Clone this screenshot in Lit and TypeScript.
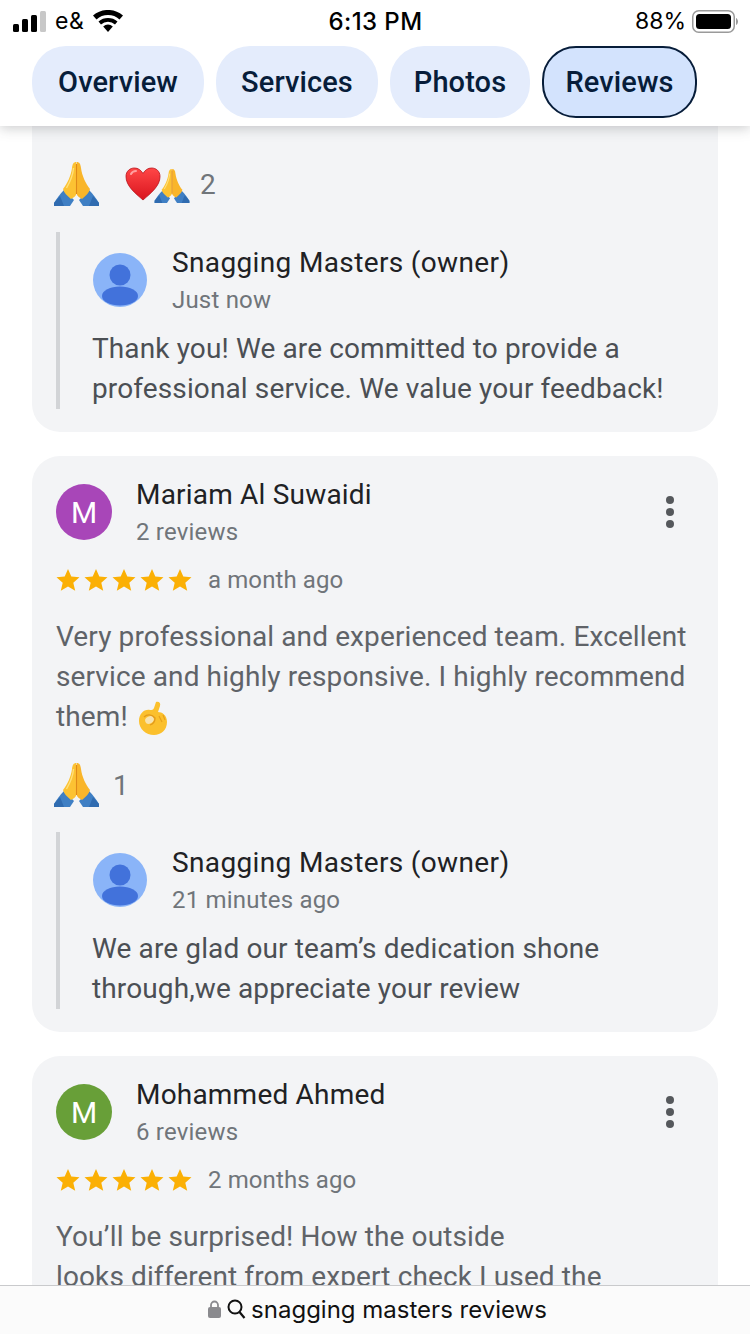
import { LitElement, html, css, svg } from "lit";
import { customElement } from "lit/decorators.js";

const pray = (w: number, h: number) => html`<svg class="emoji" width=${w} height=${h} viewBox="0 0 45 44">
  <path d="M0 44V41C3 36 6 32 10 28L20 38L16 44Z" fill="#3f7fc4"/>
  <path d="M45 44V41C42 36 39 32 35 28L25 38L29 44Z" fill="#3f7fc4"/>
  <path d="M0 44V41L6 34L10 44Z" fill="#2f6bb0"/>
  <path d="M45 44V41L39 34L35 44Z" fill="#2f6bb0"/>
  <path d="M22.300 0C19.500 0 18.500 2 18 6C17 14 13 22 9 27C10 31 13 33.500 17 37C19 36 22 34 22.300 32Z" fill="#fcc233"/>
  <path d="M22.700 0C25.500 0 26.500 2 27 6C28 14 32 22 36 27C35 31 32 33.500 28 37C26 36 23 34 22.700 32Z" fill="#f9b52a"/>
  <path d="M22.500 2V32" stroke="#e08a1a" stroke-width="1.100"/>
  <path d="M19.500 6C19 13 16 20 12.500 26" stroke="#ffe07a" stroke-width="1.400" fill="none"/>
</svg>`;

const heart = html`<svg class="emoji heart" width="36" height="36" viewBox="0 0 36 36">
  <defs>
    <linearGradient id="hg" x1="0" y1="0" x2="0" y2="1">
      <stop offset="0" stop-color="#ff4747"/>
      <stop offset="1" stop-color="#d9141e"/>
    </linearGradient>
  </defs>
  <path d="M18 34C10 27 1 20 1 10.500C1 5 5 2 9.500 2C13 2 16 4 18 7.500C20 4 23 2 26.500 2C31 2 35 5 35 10.500C35 20 26 27 18 34Z" fill="url(#hg)" stroke="#b81018" stroke-width="0.800"/>
  <path d="M6 8C7 6 9 5 11 5" stroke="#ffa0a0" stroke-width="2" fill="none" stroke-linecap="round"/>
</svg>`;

const okHand = html`<svg class="emoji ok" width="30" height="34" viewBox="0 0 30 34">
  <path d="M18 1C21 0 23 2 22 5L20 11C24 11 29 14 29 21C29 29 23 34 16 34C8 34 1 28 1 20C1 13 6 8 12 9C14 9 15 9 16 7Z" fill="#fbc02d"/>
  <ellipse cx="11.500" cy="19" rx="4.500" ry="3.500" fill="#f7e3b0" transform="rotate(-25 11.500 19)"/>
  <path d="M6 16C9 13 14 13 17 17C17 20 15 23 12 24" stroke="#e39a1c" stroke-width="1.300" fill="none"/>
  <path d="M21 15L24 21M25 14L27 19" stroke="#e8a01c" stroke-width="1.200" fill="none"/>
</svg>`;

const person = html`<svg class="owner-av" width="56" height="56" viewBox="0 0 56 56">
  <circle cx="28" cy="28" r="27" fill="#8ab4f8"/>
  <circle cx="28" cy="23" r="10.500" fill="#4272db"/>
  <ellipse cx="28" cy="44" rx="18" ry="9.500" fill="#4272db"/>
</svg>`;

const starPath = "M12 1l3.300 7.600 8.200.7-6.200 5.400 1.900 8.100L12 18.500 4.800 22.800l1.900-8.100L.5 9.300l8.200-.7z";
const stars = html`<svg class="stars" width="136" height="24" viewBox="0 0 136 24">
  ${[0, 28, 56, 84, 112].map(
    (x) => svg`<path transform="translate(${x} 0)" d=${starPath} fill="#fbb005"/>`
  )}
</svg>`;

const dots = html`<svg class="dots" width="10" height="34" viewBox="0 0 10 34">
  <circle cx="5" cy="5" r="4" fill="#55585c"/><circle cx="5" cy="17" r="4" fill="#55585c"/><circle cx="5" cy="29" r="4" fill="#55585c"/>
</svg>`;

const TABS = [
  { label: "Overview", width: 172 },
  { label: "Services", width: 162 },
  { label: "Photos", width: 140 },
  { label: "Reviews", width: 155, active: true },
];

@customElement("app-root")
export class AppRoot extends LitElement {
  static styles = css`
    :host {
      display: block;
      width: 750px;
      height: 1334px;
      overflow: hidden;
      position: relative;
      background: #fff;
      font-family: Roboto, "Liberation Sans", sans-serif;
    }
    header {
      position: relative;
      z-index: 2;
      height: 126px;
      background: #fff;
      box-shadow: 0 2px 12px rgba(60, 64, 67, 0.28);
    }
    .status {
      height: 46px;
      box-sizing: border-box;
      display: grid;
      grid-template-columns: 1fr auto 1fr;
      align-items: center;
      padding: 0 12px 4px 13px;
      color: #000;
      font-family: Inter, "Liberation Sans", sans-serif;
    }
    .st-left { display: flex; align-items: center; font-size: 23px; }
    .st-left span { margin: 0 9px; letter-spacing: 0.5px; }
    .time { font-size: 24px; font-weight: 500; letter-spacing: 0.4px; }
    .st-right { display: flex; justify-content: flex-end; align-items: center; gap: 6px; font-size: 23px; }
    .tabs { display: flex; gap: 12px; padding: 0 32px; }
    .tab {
      height: 72px;
      box-sizing: border-box;
      border-radius: 34px;
      background: #e4ecfc;
      color: #071d3a;
      font-size: 29px;
      font-weight: 500;
      letter-spacing: 0.1px;
      display: flex;
      align-items: center;
      justify-content: center;
    }
    .tab.active {
      background: #d3e3fd;
      border: 2px solid #071d3a;
    }
    main {
      display: flex;
      flex-direction: column;
      gap: 24px;
      padding: 0 32px;
    }
    .card {
      background: #f3f4f6;
      border-radius: 28px;
      padding: 21px 24px 24px;
    }
    .card.first {
      margin-top: -30px;
      padding-top: 66px;
      border-radius: 0 0 28px 28px;
    }
    .head { display: flex; align-items: flex-start; gap: 24px; }
    .avatar {
      width: 56px;
      height: 56px;
      margin-top: 7px;
      border-radius: 50%;
      color: #fff;
      font-size: 30px;
      display: flex;
      align-items: center;
      justify-content: center;
      flex: none;
    }
    .who { flex: 1; }
    .name { font-size: 28px; line-height: 36px; color: #202124; letter-spacing: 0.2px; }
    .reply .name { letter-spacing: 0.36px; }
    .sub { font-size: 24px; line-height: 36px; margin-top: 1px; color: #70757a; letter-spacing: 0.2px; }
    .dots { margin: 18px 19px 0 0; display: block; }
    .rating { display: flex; align-items: center; gap: 16px; margin-top: 12px; height: 36px; }
    .stars { display: block; }
    .ago { font-size: 24px; color: #70757a; letter-spacing: 0.1px; }
    .body { margin-top: 19px; font-size: 28px; line-height: 40px; color: #5f6368; letter-spacing: 0.11px; }
    .emoji { display: block; flex: none; }
    .ok { display: inline-block; vertical-align: -9px; margin-left: 3px; }
    .react { display: flex; align-items: center; height: 44px; margin: 26px 0 0 -2px; }
    .card.first .react { margin-top: 0; }
    .react .count { font-size: 28px; color: #70757a; margin-left: 14px; }
    .react .count.after-small { margin-left: 10px; }
    .react .heart { margin-left: 26px; }
    .react .small { margin: 4px 0 0 -7px; }
    .reply {
      margin-top: 25px;
      border-left: 4px solid #d2d4d7;
      padding: 13px 0 0 32px;
    }
    .card.first .reply { margin-top: 26px; }
    .reply-head { display: flex; align-items: flex-start; gap: 24px; }
    .owner-av { display: block; flex: none; margin-top: 7px; }
    .reply-text { margin: 11px 0 -1px; font-size: 28px; line-height: 40px; color: #4b4f54; letter-spacing: 0.12px; white-space: nowrap; }
    .bottom {
      position: absolute;
      left: 0;
      right: 0;
      bottom: 0;
      height: 49px;
      box-sizing: border-box;
      padding: 0 0 2px 5px;
      z-index: 3;
      border-top: 1px solid #c9cacc;
      background: #fbfbfb;
      display: flex;
      align-items: center;
      justify-content: center;
      gap: 5px;
      font-family: Inter, "Liberation Sans", sans-serif;
      font-size: 24px;
      color: #111;
    }
    .bottom svg { display: block; flex: none; }
    .lock { margin-right: 1px; }
  `;

  private reply(when: string, l1: string, l2: string) {
    return html`<div class="reply">
      <div class="reply-head">
        ${person}
        <div class="who">
          <div class="name">Snagging Masters (owner)</div>
          <div class="sub">${when}</div>
        </div>
      </div>
      <div class="reply-text">${l1}<br />${l2}</div>
    </div>`;
  }

  private head(letter: string, color: string, name: string, sub: string, ago: string) {
    return html`<div class="head">
        <div class="avatar" style="background:${color}">${letter}</div>
        <div class="who">
          <div class="name">${name}</div>
          <div class="sub">${sub}</div>
        </div>
        ${dots}
      </div>
      <div class="rating">${stars}<span class="ago">${ago}</span></div>`;
  }

  render() {
    return html`
      <header>
        <div class="status">
          <div class="st-left">
            <svg width="33" height="21" viewBox="0 0 33 21">
              <rect x="0" y="13" width="6" height="8" rx="1.500" fill="#000"/>
              <rect x="9" y="8" width="6" height="13" rx="1.500" fill="#000"/>
              <rect x="18" y="4" width="6" height="17" rx="1.500" fill="#000"/>
              <rect x="27" y="0" width="6" height="21" rx="1.500" fill="#c8c8c8"/>
            </svg>
            <span>e&amp;</span>
            <svg width="30" height="22" viewBox="0 0 30 22">
              <path d="M15 22l-4.800-5.500a7 7 0 0 1 9.600 0z" fill="#000"/>
              <path d="M8 14.400a10.500 10.500 0 0 1 14 0l2.500-2.900a15 15 0 0 0-19 0z" fill="#000"/>
              <path d="M3.500 9.400a17.500 17.500 0 0 1 23 0L30 5.500A23 23 0 0 0 0 5.500z" fill="#000"/>
            </svg>
          </div>
          <div class="time">6:13 PM</div>
          <div class="st-right">
            <span>88%</span>
            <svg width="46" height="23" viewBox="0 0 46 23">
              <rect x="0.750" y="0.750" width="41.500" height="21.500" rx="6" fill="none" stroke="#9a9a9a" stroke-width="1.500"/>
              <rect x="4" y="4" width="35" height="15" rx="3.500" fill="#000"/>
              <path d="M44 8c1.200.5 2 2 2 3.500s-.8 3-2 3.500z" fill="#9a9a9a"/>
            </svg>
          </div>
        </div>
        <nav class="tabs">
          ${TABS.map(
            (t) => html`<div class="tab ${t.active ? "active" : ""}" style="width:${t.width}px">${t.label}</div>`
          )}
        </nav>
      </header>
      <main>
        <section class="card first">
          <div class="react">
            ${pray(45, 44)}
            ${heart}
            <span class="small">${pray(36, 34)}</span>
            <span class="count after-small">2</span>
          </div>
          ${this.reply("Just now", "Thank you! We are committed to provide a", "professional service. We value your feedback!")}
        </section>
        <section class="card">
          ${this.head("M", "#a846b8", "Mariam Al Suwaidi", "2 reviews", "a month ago")}
          <div class="body">Very professional and experienced team. Excellent service and highly responsive. I highly recommend them! ${okHand}</div>
          <div class="react">${pray(45, 44)}<span class="count">1</span></div>
          ${this.reply("21 minutes ago", "We are glad our team’s dedication shone", "through,we appreciate your review")}
        </section>
        <section class="card">
          ${this.head("M", "#689f38", "Mohammed Ahmed", "6 reviews", "2 months ago")}
          <div class="body">You’ll be surprised! How the outside<br />looks different from expert check I used the</div>
        </section>
      </main>
      <footer class="bottom">
        <svg class="lock" width="13" height="18" viewBox="0 0 13 18">
          <path d="M3 8V5a3.500 3.500 0 0 1 7 0v3" fill="none" stroke="#8a8a8e" stroke-width="1.800"/>
          <rect x="0" y="7" width="13" height="11" rx="2" fill="#8a8a8e"/>
        </svg>
        <svg width="19" height="20" viewBox="0 0 19 20">
          <circle cx="8" cy="8" r="6.500" fill="none" stroke="#111" stroke-width="2"/>
          <path d="M12.500 13l5 6" stroke="#111" stroke-width="2.200"/>
        </svg>
        <span>snagging masters reviews</span>
      </footer>
    `;
  }
}
